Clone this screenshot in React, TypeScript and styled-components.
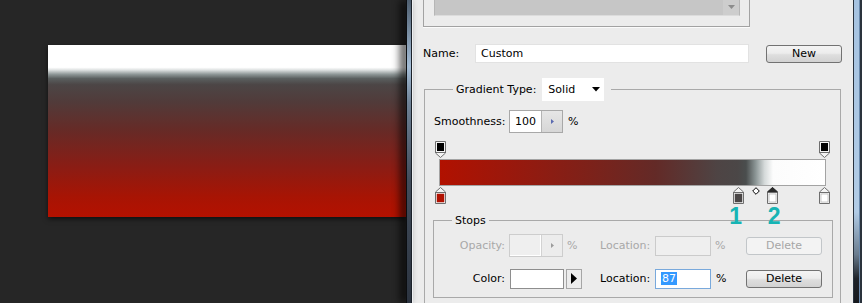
import React from "react";
import styled, { createGlobalStyle, css } from "styled-components";

const Global = createGlobalStyle`
  html, body { margin: 0; padding: 0; background: #262626; overflow: hidden; }
  body { width: 862px; height: 303px; font-family: "DejaVu Sans", "Liberation Sans", sans-serif; font-size: 11px; }
  #root { width: 862px; height: 303px; }
`;

const Page = styled.div`
  display: flex;
  align-items: flex-start;
  width: 862px;
  height: 303px;
  overflow: hidden;
  background: #262626;
`;

const Canvas = styled.div`
  width: 406px;
  flex: none;
  box-sizing: border-box;
  padding: 45px 0 0 48px;
`;

const Artwork = styled.div`
  width: 358px;
  height: 172px;
  background: linear-gradient(
    to bottom,
    #ffffff 0%,
    #ffffff 13%,
    #dfe2e2 14.5%,
    #8f9898 17%,
    #5a5f5f 19.5%,
    #4c4646 23%,
    #513b3a 33%,
    #672a26 50%,
    #891d15 70%,
    #a71404 88%,
    #b41100 100%
  );
  box-shadow: 0 2px 5px rgba(0, 0, 0, 0.6);
`;

const FrameLeft = styled.div`
  position: relative;
  z-index: 1;
  width: 7px;
  height: 303px;
  flex: none;
  background:
    linear-gradient(to right, #0b0d10 0 1px, transparent 1px 4.5px, #1b2129 4.5px 6px, #eef0f2 6px 7px),
    linear-gradient(to bottom, #4f5f70 0%, #a4bdd6 22%, #6f8296 34%, #414c5a 60%, #2c3440 100%);
  box-shadow: -5px 0 9px rgba(0, 0, 0, 0.85);
`;

const FrameRight = styled.div`
  width: 9px;
  height: 303px;
  flex: none;
  background:
    linear-gradient(to right, #27313d 0 1px, transparent 1px 6px, #6a8aad 6px 7px, #2a323c 7px 9px),
    linear-gradient(to bottom, #a6c3e1 0%, #b2cce6 70%, #6a7c8e 84%, #1e2228 92%, #15181c 100%);
`;

const Dialog = styled.div`
  width: 440px;
  flex: none;
  box-sizing: border-box;
  background: #ececec;
  padding-left: 10px;
  display: flex;
  flex-direction: column;
  color: #000;
  & > * {
    flex-shrink: 0;
  }
`;

const PresetPanel = styled.div`
  width: 327px;
  height: 27px;
  box-sizing: border-box;
  border: 1px solid #a2a2a2;
  border-top: none;
  box-shadow: 0 1px 0 #fbfbfb;
  padding-left: 10px;
`;

const PresetList = styled.div`
  width: 306px;
  height: 16px;
  box-sizing: border-box;
  background: #c6c6c6;
  border: 1px solid #b6b6b6;
  border-top: none;
  border-bottom-color: #dcdcdc;
  display: flex;
  justify-content: flex-end;
`;

const PresetScroll = styled.div`
  width: 16px;
  height: 100%;
  background: #cdcdcd;
  display: flex;
  align-items: flex-start;
  justify-content: center;
  padding-top: 5px;
  box-sizing: border-box;
`;

const NameRow = styled.div`
  display: flex;
  align-items: center;
  margin-top: 17px;
  height: 19px;
`;

const RowLabel = styled.span<{ $w?: number; $disabled?: boolean }>`
  display: inline-block;
  width: ${(p) => (p.$w ? `${p.$w}px` : "auto")};
  flex: none;
  color: ${(p) => (p.$disabled ? "#a8a8a8" : "#000")};
  white-space: nowrap;
`;

const Field = styled.div<{ $w: number; $h: number; $focus?: boolean; $disabled?: boolean }>`
  width: ${(p) => p.$w}px;
  height: ${(p) => p.$h}px;
  box-sizing: border-box;
  flex: none;
  display: flex;
  align-items: center;
  padding-left: 5px;
  background: ${(p) => (p.$disabled ? "#efefef" : "#fff")};
  border: 1px solid ${(p) => (p.$focus ? "#79a9dc" : p.$disabled ? "#cbcbcb" : "#e2e2e2")};
  white-space: nowrap;
`;

const Selected = styled.span`
  background: #3399ff;
  color: #fff;
  padding: 0 1px;
`;

const WinButton = styled.button<{ $disabled?: boolean }>`
  width: 76px;
  height: 18px;
  flex: none;
  box-sizing: border-box;
  padding: 0;
  font-family: inherit;
  font-size: 11px;
  border-radius: 3px;
  ${(p) =>
    p.$disabled
      ? css`
          border: 1px solid #c2c6c9;
          background: #f3f3f3;
          color: #a6a6a6;
        `
      : css`
          border: 1px solid #727272;
          background: linear-gradient(to bottom, #f4f4f4 0%, #ececec 45%, #dedede 55%, #d2d2d2 100%);
          color: #000;
        `}
`;

const NewButton = styled(WinButton)`
  margin-left: 17px;
`;

const GradientGroup = styled.fieldset`
  margin: 15px 0 0 1px;
  width: 417px;
  box-sizing: border-box;
  border: 1px solid #a9a9a9;
  padding: 0 6px 30px 8px;
  min-width: 0;
`;

const TypeLegend = styled.legend`
  margin-left: 20px;
  padding: 0 7px 0 3px;
  display: flex;
  align-items: center;
`;

const SelectBox = styled.div`
  margin-left: 6px;
  width: 62px;
  height: 23px;
  box-sizing: border-box;
  background: #fff;
  display: flex;
  align-items: center;
  justify-content: space-between;
  padding: 0 4px 0 6px;
`;

const SmoothRow = styled.div`
  display: flex;
  align-items: center;
  height: 23px;
  margin: 9px 0 0 1px;
`;

const Spinner = styled.div<{ $disabled?: boolean }>`
  width: 54px;
  height: 23px;
  box-sizing: border-box;
  flex: none;
  display: flex;
  border: 1px solid ${(p) => (p.$disabled ? "#cdcdcd" : "#a8a8a8")};
`;

const SpinValue = styled.div<{ $disabled?: boolean }>`
  width: 31px;
  flex: none;
  display: flex;
  align-items: center;
  padding-left: 5px;
  box-sizing: border-box;
  background: ${(p) => (p.$disabled ? "#efefef" : "#fff")};
  box-shadow: ${(p) => (p.$disabled ? "inset -1px -1px 0 #fff" : "none")};
`;

const SpinArrow = styled.div<{ $disabled?: boolean }>`
  flex: 1;
  display: flex;
  align-items: center;
  justify-content: center;
  border-left: 1px solid ${(p) => (p.$disabled ? "#d2d2d2" : "#b4b4b4")};
  background: ${(p) =>
    p.$disabled ? "#ececec" : "linear-gradient(to bottom, #e6e6e6, #d6d6d6)"};
`;

const Pct = styled.span<{ $disabled?: boolean; $ml?: number }>`
  margin-left: ${(p) => p.$ml ?? 0}px;
  color: ${(p) => (p.$disabled ? "#a8a8a8" : "#000")};
`;

const Editor = styled.div`
  width: 397px;
  margin: 7px 0 0 1px;
  display: flex;
  flex-direction: column;
`;

const Track = styled.div`
  position: relative;
  width: 384px;
  height: 18px;
  margin-left: 6px;
`;

const GradientBar = styled.div`
  width: 387px;
  height: 27px;
  margin: 1px 0 0 5px;
  box-sizing: border-box;
  border: 1px solid #a3a3a3;
  background: linear-gradient(
    to right,
    #b11100 0%,
    #9a180c 18%,
    #7e2119 38%,
    #632a27 56%,
    #4e4444 72%,
    #4b4747 77.4%,
    #4a4e4e 79.5%,
    #8c9696 82%,
    #d5dada 84.3%,
    #fcfcfc 86.5%,
    #ffffff 100%
  );
`;

const Marker = styled.div<{ $pos: number }>`
  position: absolute;
  top: 1px;
  left: ${(p) => p.$pos}%;
  width: 11px;
  height: 17px;
  margin-left: -5px;
  line-height: 0;
`;

const Midpoint = styled.div<{ $pos: number }>`
  position: absolute;
  top: 1px;
  left: ${(p) => p.$pos}%;
  margin-left: -4px;
  width: 8px;
  height: 8px;
  line-height: 0;
`;

const Callout = styled.div<{ $pos: number; $shift: number }>`
  position: absolute;
  z-index: 2;
  top: 17px;
  left: ${(p) => p.$pos}%;
  transform: translateX(calc(-50% + ${(p) => p.$shift}px));
  font-family: "Liberation Sans", Arial, sans-serif;
  font-weight: bold;
  font-size: 23px;
  line-height: 26px;
  color: #17b4b4;
`;

const StopsGroup = styled.fieldset`
  margin: 10px 0 0 0;
  width: 400px;
  box-sizing: border-box;
  border: 1px solid #a9a9a9;
  padding: 7px 0 7px 0;
  min-width: 0;
`;

const StopsLegend = styled.legend`
  margin-left: 18px;
  padding: 0 3px;
`;

const StopsGrid = styled.div`
  display: grid;
  grid-template-columns: 75px 58px 33px 55px 60px 31px 76px;
  grid-auto-rows: 23px;
  row-gap: 10px;
  align-items: center;
`;

const GridLabel = styled.span<{ $disabled?: boolean; $right?: boolean }>`
  text-align: ${(p) => (p.$right ? "right" : "left")};
  padding-right: ${(p) => (p.$right ? "4px" : "0")};
  color: ${(p) => (p.$disabled ? "#a8a8a8" : "#000")};
  white-space: nowrap;
`;

const ColorPick = styled.div`
  grid-column: 2 / 4;
  display: flex;
  align-items: center;
  gap: 2px;
  margin-left: 1px;
`;

const Swatch = styled.div`
  width: 54px;
  height: 20px;
  box-sizing: border-box;
  background: #fff;
  border: 1px solid #8e8e8e;
`;

const PickArrow = styled.div`
  width: 16px;
  height: 20px;
  box-sizing: border-box;
  border: 1px solid #a6a6a6;
  background: #ececec;
  display: flex;
  align-items: center;
  justify-content: center;
`;

const TopStop = () => (
  <svg width="11" height="17" viewBox="0 0 11 17">
    <path d="M0.5 0.5 H10.5 V12 L5.5 16.5 L0.5 12 Z" fill="#f4f4f4" stroke="#6e6e6e" />
    <path d="M0.5 11.5 H10.5" stroke="#6e6e6e" />
    <rect x="2" y="2" width="7" height="8" fill="#000" />
  </svg>
);

const BottomStop = ({ color, selected }: { color: string; selected?: boolean }) => (
  <svg width="11" height="17" viewBox="0 0 11 17">
    <path d="M5.5 0.5 L10.5 5 V16.5 H0.5 V5 Z" fill="#f4f4f4" stroke="#6e6e6e" />
    {selected && <path d="M5.5 0.5 L10.5 5 H0.5 Z" fill="#2a2a2a" stroke="#2a2a2a" />}
    <path d="M0.5 5.5 H10.5" stroke="#6e6e6e" />
    <rect x="2" y="7" width="7" height="8" fill={color} stroke={color === "#ffffff" ? "#9a9a9a" : color} strokeWidth="0.5" />
  </svg>
);

const stops = [
  { pos: 0, color: "#b11100" },
  { pos: 77.5, color: "#4b4747" },
  { pos: 86.5, color: "#ffffff", selected: true },
  { pos: 100, color: "#ffffff" },
];

export default function App() {
  return (
    <>
      <Global />
      <Page>
        <Canvas>
          <Artwork />
        </Canvas>
        <FrameLeft />
        <Dialog>
          <PresetPanel>
            <PresetList>
              <PresetScroll>
                <svg width="7" height="4" viewBox="0 0 7 4">
                  <path d="M0 0 H7 L3.5 4 Z" fill="#8c8c8c" />
                </svg>
              </PresetScroll>
            </PresetList>
          </PresetPanel>

          <NameRow>
            <RowLabel $w={52}>Name:</RowLabel>
            <Field $w={274} $h={19}>Custom</Field>
            <NewButton>New</NewButton>
          </NameRow>

          <GradientGroup>
            <TypeLegend>
              Gradient Type:
              <SelectBox>
                Solid
                <svg width="8" height="5" viewBox="0 0 8 5">
                  <path d="M0 0 H8 L4 4.5 Z" fill="#000" />
                </svg>
              </SelectBox>
            </TypeLegend>

            <SmoothRow>
              <RowLabel $w={75}>Smoothness:</RowLabel>
              <Spinner>
                <SpinValue>100</SpinValue>
                <SpinArrow>
                  <svg width="3" height="5" viewBox="0 0 3 5">
                    <path d="M0 0 L3 2.5 L0 5 Z" fill="#5a6ab0" />
                  </svg>
                </SpinArrow>
              </Spinner>
              <Pct $ml={5}>%</Pct>
            </SmoothRow>

            <Editor>
              <Track>
                <Marker $pos={0}>
                  <TopStop />
                </Marker>
                <Marker $pos={100}>
                  <TopStop />
                </Marker>
              </Track>
              <GradientBar />
              <Track>
                {stops.map((s) => (
                  <Marker key={s.pos} $pos={s.pos}>
                    <BottomStop color={s.color} selected={s.selected} />
                  </Marker>
                ))}
                <Midpoint $pos={82.3}>
                  <svg width="8" height="8" viewBox="0 0 8 8">
                    <path d="M4 0.7 L7.3 4 L4 7.3 L0.7 4 Z" fill="#fff" stroke="#000" />
                  </svg>
                </Midpoint>
                <Callout $pos={77.5} $shift={-2}>1</Callout>
                <Callout $pos={86.5} $shift={2}>2</Callout>
              </Track>
            </Editor>

            <StopsGroup>
              <StopsLegend>Stops</StopsLegend>
              <StopsGrid>
                <GridLabel $right $disabled>Opacity:</GridLabel>
                <Spinner $disabled>
                  <SpinValue $disabled />
                  <SpinArrow $disabled>
                    <svg width="3" height="5" viewBox="0 0 3 5">
                      <path d="M0 0 L3 2.5 L0 5 Z" fill="#9c9c9c" />
                    </svg>
                  </SpinArrow>
                </Spinner>
                <Pct $disabled>%</Pct>
                <GridLabel $disabled>Location:</GridLabel>
                <Field $w={56} $h={20} $disabled />
                <Pct $disabled>%</Pct>
                <WinButton $disabled>Delete</WinButton>

                <GridLabel $right>Color:</GridLabel>
                <ColorPick>
                  <Swatch />
                  <PickArrow>
                    <svg width="6" height="11" viewBox="0 0 6 11">
                      <path d="M0 0 L6 5.5 L0 11 Z" fill="#000" />
                    </svg>
                  </PickArrow>
                </ColorPick>
                <GridLabel>Location:</GridLabel>
                <Field $w={56} $h={20} $focus>
                  <Selected>87</Selected>
                </Field>
                <Pct $ml={1}>%</Pct>
                <WinButton>Delete</WinButton>
              </StopsGrid>
            </StopsGroup>
          </GradientGroup>
        </Dialog>
        <FrameRight />
      </Page>
    </>
  );
}
